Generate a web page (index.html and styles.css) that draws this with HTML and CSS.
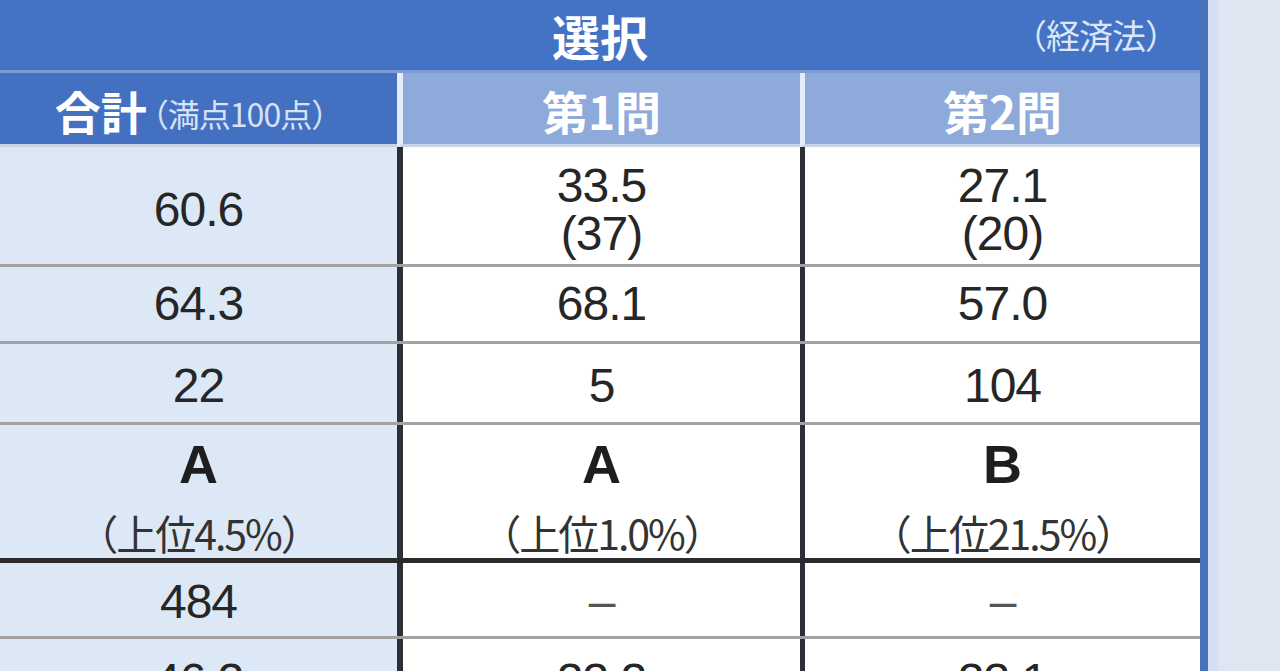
FILE: index.html
```html
<!DOCTYPE html>
<html lang="ja">
<head>
<meta charset="utf-8">
<link rel="stylesheet" href="styles.css">
</head>
<body>
<div class="sheet">
  <div class="title">
    <span></span>
    <span class="title-main">選択</span>
    <span class="title-sub">（経済法）</span>
  </div>
  <div class="row head">
    <div class="cell c1"><span class="hb">合計</span><span class="hs">（満点100点）</span></div>
    <div class="cell c2"><span class="hb">第1問</span></div>
    <div class="cell c3"><span class="hb">第2問</span></div>
  </div>
  <div class="row r1">
    <div class="cell c1 num">60.6</div>
    <div class="cell c2 num stack"><span>33.5</span><span>(37)</span></div>
    <div class="cell c3 num stack"><span>27.1</span><span>(20)</span></div>
  </div>
  <div class="row r2 thin">
    <div class="cell c1 num">64.3</div>
    <div class="cell c2 num">68.1</div>
    <div class="cell c3 num">57.0</div>
  </div>
  <div class="row r3 thin">
    <div class="cell c1 num">22</div>
    <div class="cell c2 num">5</div>
    <div class="cell c3 num">104</div>
  </div>
  <div class="row r4 thin">
    <div class="cell c1 grade"><span class="g">A</span><span class="gs">（上位4.5%）</span></div>
    <div class="cell c2 grade"><span class="g">A</span><span class="gs">（上位1.0%）</span></div>
    <div class="cell c3 grade"><span class="g">B</span><span class="gs">（上位21.5%）</span></div>
  </div>
  <div class="row r5 thick">
    <div class="cell c1 num">484</div>
    <div class="cell c2 num dash">–</div>
    <div class="cell c3 num dash">–</div>
  </div>
  <div class="row r6 thin">
    <div class="cell c1 num">46.2</div>
    <div class="cell c2 num">23.2</div>
    <div class="cell c3 num">23.1</div>
  </div>
</div>
</body>
</html>
```

FILE: styles.css
```css
html, body {
  margin: 0;
  padding: 0;
}
body {
  background: #dfe6f2;
  font-family: "Liberation Sans", "Noto Sans CJK JP", sans-serif;
  color: #262626;
  overflow: hidden;
  height: 671px;
}
.sheet {
  width: 1200px;
  border-right: 8px solid #4a72b8;
  box-shadow: 10px 0 0 #d3dff3;
}
.title {
  height: 70px;
  background: #4472c4;
  display: grid;
  grid-template-columns: 1fr auto 1fr;
  align-items: center;
}
.title-main {
  font-family: "Noto Sans CJK JP", sans-serif;
  font-weight: 700;
  font-size: 48px;
  line-height: 1;
  color: #ffffff;
}
.title-sub {
  justify-self: end;
  padding-right: 22px;
  font-family: "Noto Sans CJK JP", sans-serif;
  font-size: 34px;
  line-height: 1;
  color: #dce6f7;
  letter-spacing: -1px;
}
.row {
  display: grid;
  grid-template-columns: 397px 403px 400px;
  box-sizing: border-box;
}
.cell {
  display: flex;
  align-items: center;
  justify-content: center;
  box-sizing: border-box;
}
.row .c1 { background: #dde8f6; }
.row .c2 { background: #ffffff; border-left: 6px solid #2c3036; }
.row .c3 { background: #ffffff; border-left: 5px solid #2c3036; }

.head {
  height: 77px;
  border-top: 3px solid #7f9ad2;
}
.head .c1 { background: #4470c2; }
.head .c2 { background: #8eaadb; border-left: 6px solid #e4ecf8; }
.head .c3 { background: #8eaadb; border-left: 5px solid #e4ecf8; }
.head .cell {
  border-bottom: 3px solid #c9d4e6;
  padding-top: 2px;
}
.hb {
  font-family: "Noto Sans CJK JP", sans-serif;
  font-weight: 700;
  font-size: 46px;
  line-height: 1;
  color: #ffffff;
}
.hs {
  font-family: "Noto Sans CJK JP", sans-serif;
  font-size: 32px;
  line-height: 1;
  color: #d7e2f6;
  margin-top: 6px;
  margin-left: -10px;
  letter-spacing: -1px;
}

.num {
  font-size: 48px;
  letter-spacing: -1px;
  line-height: 48px;
}
.stack {
  flex-direction: column;
  padding-top: 8px;
}
.stack span {
  display: block;
  line-height: 48px;
}

.thin { border-top: 3px solid #a2a2a2; }
.thick { border-top: 5px solid #2b2b2b; }

.r1 { height: 117px; }
.r1 .c1 { padding-top: 8px; }
.r2 { height: 77px; }
.r3 { height: 81px; }
.r3 .cell { padding-top: 6px; }
.r4 { height: 136px; }
.r5 { height: 78px; }
.r5 .cell { padding-top: 4px; }
.r6 { height: 80px; }
.r6 .cell { padding-top: 6px; }

.grade {
  flex-direction: column;
  justify-content: flex-start;
  padding-top: 10px;
}
.g {
  font-weight: 700;
  font-size: 54px;
  line-height: 58px;
  color: #1e1e1e;
}
.gs {
  font-family: "Noto Sans CJK JP", sans-serif;
  font-size: 41px;
  line-height: 46px;
  margin-top: 16px;
  color: #333333;
  letter-spacing: -2px;
}
.dash {
  color: #555555;
}
```
